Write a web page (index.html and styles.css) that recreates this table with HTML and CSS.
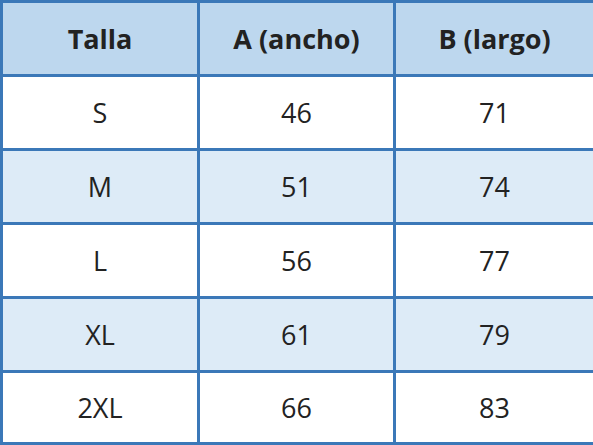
FILE: index.html
```html
<!DOCTYPE html>
<html lang="es">
<head>
<meta charset="utf-8">
<title>Tallas</title>
<link rel="stylesheet" href="styles.css">
</head>
<body>
<table class="sizes">
  <colgroup><col class="c1"><col class="c2"><col class="c3"></colgroup>
  <thead>
    <tr class="head"><th>Talla</th><th>A (ancho)</th><th>B (largo)</th></tr>
  </thead>
  <tbody>
    <tr class="row"><td>S</td><td>46</td><td>71</td></tr>
    <tr class="row alt"><td>M</td><td>51</td><td>74</td></tr>
    <tr class="row"><td>L</td><td>56</td><td>77</td></tr>
    <tr class="row alt"><td>XL</td><td>61</td><td>79</td></tr>
    <tr class="row last"><td>2XL</td><td>66</td><td>83</td></tr>
  </tbody>
</table>
</body>
</html>
```
FILE: styles.css
```css
html, body {
  margin: 0;
  padding: 0;
  background: #ffffff;
}
.sizes {
  border-collapse: collapse;
  table-layout: fixed;
  width: 593px;
  font-family: "Open Sans", "Liberation Sans", sans-serif;
  color: #222222;
}
.c1 { width: 197px; }
.c2 { width: 196px; }
.c3 { width: 200px; }
.sizes th, .sizes td {
  border: 3px solid #3b78b8;
  text-align: center;
  vertical-align: middle;
  padding: 0;
  line-height: 1;
}
.sizes th {
  height: 71px;
  background: #bdd7ee;
  font-weight: 700;
  font-size: 27px;
}
.sizes td {
  height: 71px;
  font-size: 27px;
  font-weight: 400;
  background: #ffffff;
}
.sizes .alt td {
  background: #ddebf7;
}
.sizes .last td {
  height: 69px;
}
```
